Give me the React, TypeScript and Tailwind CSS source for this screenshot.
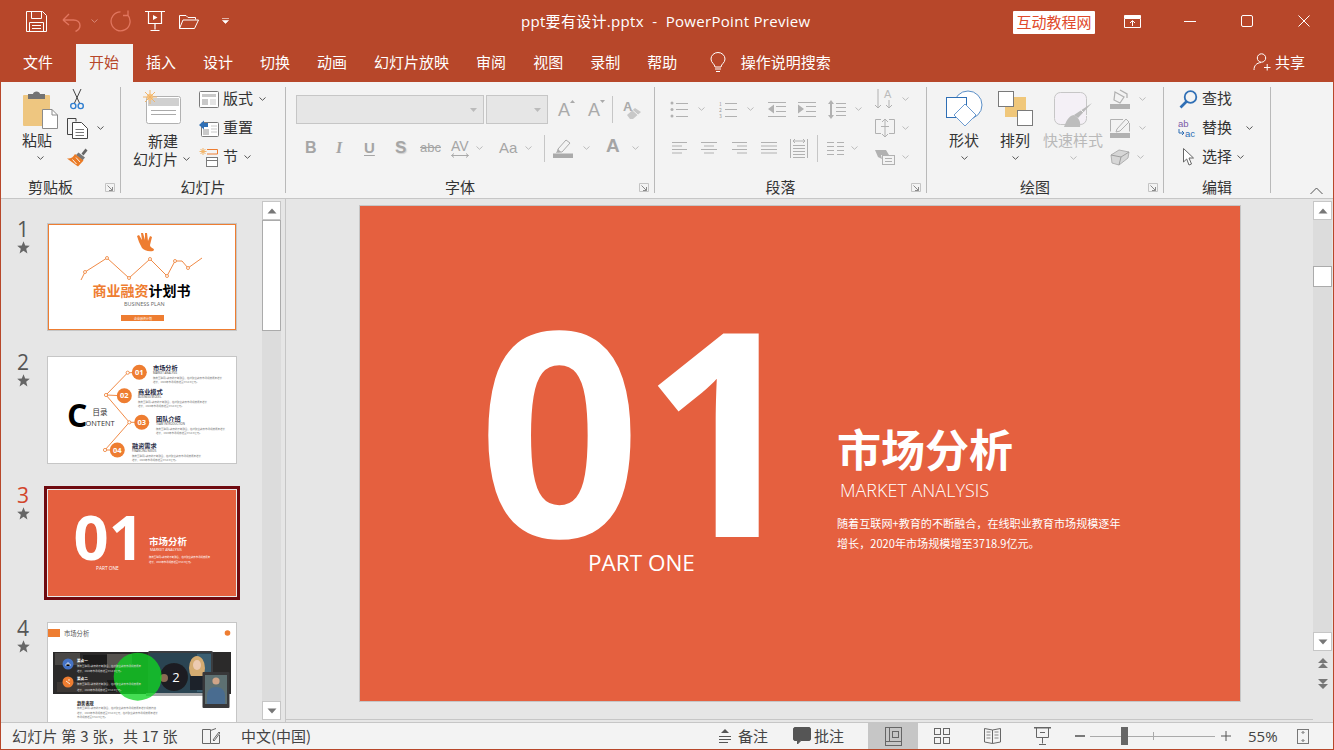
import React from "react";

const G = "#b1b1b1";

function S({ w, h, children, className = "" }: { w: number; h: number; children?: React.ReactNode; className?: string }) {
  return (
    <svg width={w} height={h} viewBox={`0 0 ${w} ${h}`} fill="none" className={"block shrink-0 " + className}>
      {children}
    </svg>
  );
}

function Chev({ c = "#555" }: { c?: string }) {
  return (
    <S w={7} h={4}>
      <path d="M0.5 0.5L3.5 3.3L6.5 0.5" stroke={c} strokeWidth="1" />
    </S>
  );
}

function Launcher() {
  return (
    <div className="absolute right-[5px] bottom-[1px]">
      <S w={10} h={9}>
        <path d="M0.5 8.5V0.5H9.5V8.5Z" stroke="#c4c4c4" />
        <path d="M2.5 2.5L7.5 7.5M7.5 4V7.5H4" stroke="#8a8a8a" />
      </S>
    </div>
  );
}

function Group({ w, label, launcher, children }: { w: string; label: string; launcher?: boolean; children: React.ReactNode }) {
  return (
    <div className={"relative mt-[5px] flex h-[106px] shrink-0 flex-col border-r border-[#b9b9b9] " + w}>
      <div className="h-[91px] shrink-0">{children}</div>
      <div className={"h-[18px] shrink-0 text-center text-[15px] leading-[18px] text-[#333] " + (launcher ? "pr-[20px]" : "")}>{label}</div>
      {launcher && <Launcher />}
    </div>
  );
}

function Tab({ children, active }: { children: React.ReactNode; active?: boolean }) {
  return (
    <div className={"flex h-[38px] items-center px-[13.5px] pb-[2px] text-[15px] whitespace-nowrap " + (active ? "bg-[#f3f3f3] text-[#b7472a]" : "text-white")}>
      {children}
    </div>
  );
}

const Star = () => (
  <S w={13} h={13}>
    <path d="M6.5 0.3L8.2 4.6L12.8 4.8L9.2 7.7L10.4 12.4L6.5 9.8L2.6 12.4L3.8 7.7L0.2 4.8L4.8 4.6Z" fill="#666" />
  </S>
);

function Thumb({ n, active, children }: { n: number; active?: boolean; children: React.ReactNode }) {
  return (
    <div className="flex h-[133px] shrink-0">
      <div className="flex w-[46px] shrink-0 flex-col items-end pr-[18px]">
        <div className={"-mt-[8px] h-[28px] text-[21px] leading-[28px] font-['Open_Sans',sans-serif] " + (active ? "text-[#d2452b]" : "text-[#555]")}>{n}</div>
        <div className="-mt-[2px] -mr-[1px]"><Star /></div>
      </div>
      <div className={"h-[108px] w-[190px] shrink-0 bg-white " + (active ? "ring-[3px] ring-[#6f0a10]" : "")}>{children}</div>
    </div>
  );
}

const F = "'Noto Sans CJK SC', sans-serif";
const OS = "'Open Sans', sans-serif";
const OR = "#ee7d31";

function Tiny({ x, y, t, s = 2.8, c = "#777" }: { x: number; y: number; t: string; s?: number; c?: string }) {
  return <text x={x} y={y} fontSize={s} fill={c} fontFamily={F}>{t}</text>;
}

function Slide1() {
  return (
    <svg width="190" height="108" viewBox="0 0 190 108" className="block">
      <rect x="0.5" y="0.5" width="189" height="107" fill="#fff" stroke="#c6c6c6" />
      <rect x="1.5" y="1.5" width="187" height="105" fill="none" stroke={OR} />
      <path d="M89 16l3 3-2-6 2-1 3 5-1-7 2 0 2 7 0-7 2 0 1 8 2-5 2 1-2 8c0 3 4 3 4 5l-1 1c-5 1-9-1-11-3l-3-6z" fill={OR} />
      <polyline points="34,57 38,49 60,35 82,55 103,36 120,53 128,38 135,38 141,45 155,35" stroke={OR} strokeWidth="0.9" fill="none" />
      {[[38, 49], [60, 35], [82, 55], [103, 36], [120, 53], [128, 38], [141, 45]].map(([x, y], i) => (
        <circle key={i} cx={x} cy={y} r="1.5" fill="#fff" stroke={OR} strokeWidth="0.8" />
      ))}
      <text x="45.5" y="73" fontSize="14" fontWeight="700" fontFamily={F} fill={OR}>商业融资<tspan fill="#000">计划书</tspan></text>
      <text x="77" y="82.5" fontSize="5.5" fontFamily={OS} fill="#666">BUSINESS PLAN</text>
      <rect x="74" y="92" width="43" height="6" fill={OR} />
      <text x="87" y="96.5" fontSize="3" fontFamily={F} fill="#fff">企业融资计划</text>
    </svg>
  );
}

function Slide2() {
  const items = [
    { cx: 92.3, cy: 16.3, n: "01", tx: 106, ty: 13.5, t: "市场分析", s: "MARKET ANALYSIS" },
    { cx: 77.3, cy: 39.7, n: "02", tx: 91, ty: 37.5, t: "商业模式", s: "BUSINESS MODEL" },
    { cx: 94.7, cy: 66.3, n: "03", tx: 109, ty: 64.5, t: "团队介绍", s: "TEAM INTRODUCTION" },
    { cx: 70.3, cy: 94, n: "04", tx: 85, ty: 91.5, t: "融资需求", s: "FINANCING NEEDS" },
  ];
  return (
    <svg width="190" height="108" viewBox="0 0 190 108" className="block">
      <rect x="0.5" y="0.5" width="189" height="107" fill="#fff" stroke="#c6c6c6" />
      <polyline points="80.7,16.7 59,39 82.3,66.3 58,94" stroke={OR} strokeWidth="0.9" fill="none" />
      <line x1="59" y1="39" x2="70" y2="39.5" stroke={OR} strokeWidth="0.9" />
      <line x1="82.3" y1="66.3" x2="87" y2="66.3" stroke={OR} strokeWidth="0.9" />
      <line x1="58" y1="94" x2="63" y2="94" stroke={OR} strokeWidth="0.9" />
      <line x1="80.7" y1="16.7" x2="85" y2="16.7" stroke={OR} strokeWidth="0.9" />
      {[[80.7, 16.7], [59, 39], [82.3, 66.3], [58, 94]].map(([x, y], i) => (
        <circle key={i} cx={x} cy={y} r="1.6" fill="#fff" stroke={OR} strokeWidth="0.8" />
      ))}
      {items.map((i) => (
        <g key={i.n}>
          <circle cx={i.cx} cy={i.cy} r="7.5" fill={OR} />
          <text x={i.cx} y={i.cy + 2.7} fontSize="7.5" fontWeight="700" fill="#fff" textAnchor="middle" fontFamily={OS}>{i.n}</text>
          <text x={i.tx} y={i.ty} fontSize="6.2" fontWeight="700" fill="#1f2a44" fontFamily={F}>{i.t}</text>
          <text x={i.tx} y={i.ty + 4} fontSize="2.8" fill="#444" fontFamily={OS}>{i.s}</text>
          <Tiny x={i.tx} y={i.ty + 9.5} s={2.5} t="随着互联网+教育的不断融合，在线职业教育市场规模逐年增长" />
          <Tiny x={i.tx} y={i.ty + 13} s={2.5} t="增长，2020年市场规模增至3718.9亿元。" />
        </g>
      ))}
      <text x="20" y="70.5" fontSize="32" fontWeight="700" fill="#000" fontFamily={OS}>C</text>
      <text x="45.5" y="58.5" fontSize="7.5" fill="#333" fontFamily={F}>目录</text>
      <text x="38.5" y="69.5" fontSize="7.4" fill="#333" fontFamily={OS}>ONTENT</text>
    </svg>
  );
}

function Slide3() {
  return (
    <svg width="190" height="108" viewBox="0 0 190 108" className="block">
      <rect x="0.5" y="0.5" width="189" height="107" fill="#e5603f" stroke="#e8e8e8" />
      <text x="26.5" y="71" fontSize="61.5" fontWeight="700" fill="#fff" fontFamily={OS}>01</text>
      <text x="49" y="80.5" fontSize="4.8" fill="#fff" fontFamily={OS}>PART ONE</text>
      <text x="102" y="56" fontSize="9.5" fontWeight="700" fill="#fff" fontFamily={F}>市场分析</text>
      <text x="103" y="62" fontSize="3.7" fill="#fff" fontFamily={OS}>MARKET ANALYSIS</text>
      <text x="102" y="69" fontSize="2.4" fill="#fff" fontFamily={F}>随着互联网+教育的不断融合，在线职业教育市场规模逐年</text>
      <text x="102" y="73.5" fontSize="2.4" fill="#fff" fontFamily={F}>增长，2020年市场规模增至3718.9亿元。</text>
    </svg>
  );
}

function Slide4() {
  return (
    <svg width="190" height="108" viewBox="0 0 190 108" className="block">
      <defs>
        <filter id="soft" x="-5%" y="-5%" width="110%" height="110%"><feGaussianBlur stdDeviation="0.5" /></filter>
      </defs>
      <rect x="0.5" y="0.5" width="189" height="107" fill="#fff" stroke="#c6c6c6" />
      <rect x="1" y="7" width="12" height="8" fill={OR} />
      <text x="17" y="14" fontSize="6.3" fill="#555" fontFamily={F}>市场分析</text>
      <circle cx="180.5" cy="11" r="2.8" fill={OR} />
      <rect x="6" y="30" width="178" height="42" fill="#2b2a2a" />
      <g filter="url(#soft)">
        <rect x="8" y="31" width="25" height="12" fill="#4a4745" />
        <rect x="36" y="33" width="28" height="10" fill="#1b1b1b" />
        <rect x="60" y="32" width="25" height="14" fill="#565350" />
        <rect x="10" y="60" width="45" height="10" fill="#3c3836" />
        <rect x="60" y="58" width="30" height="12" fill="#1a1a1a" />
      </g>
      <rect x="101" y="29" width="65" height="44" rx="1.5" fill="#3b3d40" />
      <rect x="103" y="31" width="61" height="40" fill="#2a4452" />
      <g filter="url(#soft)">
        <rect x="150" y="32" width="14" height="38" fill="#3a5f72" />
        <circle cx="127" cy="55" r="14" fill="#1c1f23" />
        <circle cx="117" cy="56" r="4" fill="#8c6a52" />
        <ellipse cx="150" cy="46" rx="8" ry="12" fill="#d4ac71" />
        <ellipse cx="150" cy="43" rx="4" ry="5" fill="#eccab0" />
        <rect x="143" y="54" width="14" height="14" fill="#1b242b" />
      </g>
      <rect x="99" y="71" width="69" height="3" fill="#a5a7aa" />
      <rect x="155.5" y="50" width="27" height="36" rx="1" fill="#38383a" />
      <rect x="158" y="53" width="22" height="29" fill="#5d7072" />
      <g filter="url(#soft)">
        <circle cx="169" cy="59" r="3.6" fill="#cfa488" />
        <path d="M160 82v-8c0-6 4-9 9-9s9 3 9 9v8z" fill="#4a6c90" />
      </g>
      <circle cx="90.7" cy="54.7" r="24" fill="#10d522" fillOpacity="0.78" />
      <text x="129" y="60" fontSize="13" fill="#fff" textAnchor="middle" fontFamily={OS}>2</text>
      <circle cx="21" cy="42" r="5.5" fill="#4472c4" />
      <circle cx="21" cy="60" r="5.5" fill={OR} />
      <path d="M19 44v-2h4v2M21 40v2" stroke="#fff" strokeWidth="0.7" />
      <path d="M19 59l4 3M21 58h2" stroke="#fff" strokeWidth="0.8" />
      <text x="30" y="39.5" fontSize="3.6" fontWeight="700" fill="#fff" fontFamily={F}>要点一</text>
      <Tiny x={30} y={44.5} s={2.5} c="#ddd" t="随着互联网+教育的不断融合，在线职业教育市场规模逐年" />
      <Tiny x={30} y={50} s={2.5} c="#ddd" t="增长，2020年市场规模增至3718.9亿元。" />
      <text x="30" y="58" fontSize="3.6" fontWeight="700" fill="#fff" fontFamily={F}>要点二</text>
      <Tiny x={30} y={63} s={2.5} c="#ddd" t="随着互联网+教育的不断融合，在线职业教育市场规模逐年" />
      <Tiny x={30} y={68.5} s={2.5} c="#ddd" t="增长，2020年市场规模增至3718.9亿元。" />
      <text x="30" y="82.5" fontSize="4.2" fontWeight="700" fill="#222" fontFamily={F}>趋势表现</text>
      <Tiny x={30} y={87} s={2.5} t="随着互联网+教育的不断融合，在线职业教育市场规模逐年增长规模持续" />
      <Tiny x={30} y={91.5} s={2.5} t="增长，2020年市场规模增至3718.9亿元，在线职业教育市场规模逐年增长" />
      <Tiny x={30} y={96} s={2.5} t="市场规模增至3718.9亿元。" />
    </svg>
  );
}

const Up = () => <S w={10} h={6}><path d="M5 0.5L9.5 5.5H0.5Z" fill="#777" /></S>;
const Dn = () => <S w={10} h={6}><path d="M0.5 0.5H9.5L5 5.5Z" fill="#777" /></S>;
const ScrollBtn = ({ children }: { children: React.ReactNode }) => (
  <div className="flex h-[19px] w-[19px] shrink-0 items-center justify-center border border-[#c6c6c6] bg-white">{children}</div>
);

const Lines = ({ d, c = G }: { d: string; c?: string }) => <path d={d} stroke={c} />;

export default function App() {
  return (
    <div className="flex h-[750px] w-[1334px] flex-col overflow-hidden border-x border-b border-[#b7472a] bg-[#e6e6e6] font-['Noto_Sans_CJK_SC',sans-serif]">
      {/* Title bar */}
      <div className="flex h-[44px] shrink-0 items-center bg-[#b7472a] pb-[2px] text-white">
        <div className="flex w-[520px] shrink-0 items-center">
          <S w={21} h={21} className="ml-[25px]">
            <path d="M0.5 0.5H16.5L20.5 4.5V20.5H0.5Z" stroke="#fff" />
            <path d="M5.5 0.5V7.5H15.5V0.5M3.5 20.5V11.5H17.5V20.5" stroke="#fff" />
            <path d="M6 14.5H15M6 17.5H15" stroke="#fff" />
          </S>
          <S w={19} h={21} className="ml-[15px]">
            <path d="M1 9H11.5C15.5 9 18 11.5 18 14.5C18 17 16.5 19 13.5 20.5M1 9L7 3M1 9L7 14" stroke="#e1765f" strokeWidth="1.4" />
          </S>
          <div className="ml-[10px]"><Chev c="#d98a78" /></div>
          <S w={21} h={22} className="ml-[12px]">
            <path d="M10.5 1.8A9.5 9.5 0 1 1 3.5 4.8M3 0.5V5.5H8" stroke="#e1765f" strokeWidth="1.3" transform="matrix(-1 0 0 1 21 0)" />
          </S>
          <S w={20} h={20} className="ml-[14px]">
            <path d="M0 0.5H20M3.5 0.5V12.5H16.5V0.5M10 12.5V18.5M5.5 19.5H14.5" stroke="#fff" strokeWidth="1.2" />
            <path d="M8 4L12.5 6.5L8 9Z" fill="#fff" />
          </S>
          <S w={20} h={15} className="ml-[14px]">
            <path d="M0.5 14.5V1.5H7L9 3.5H16.5V5.5M0.5 14.5H15.5L19.5 6H4L0.5 14.5Z" stroke="#fff" />
          </S>
          <S w={7} h={6} className="ml-[23px]">
            <path d="M0 0.5H7M0.5 2.5H6.5L3.5 5.5Z" fill="#fff" stroke="#fff" strokeWidth="0.6" />
          </S>
        </div>
        <div className="text-[15px] tracking-[0.3px] whitespace-pre font-['Open_Sans','Noto_Sans_CJK_SC',sans-serif]">ppt要有设计.pptx  -  PowerPoint Preview</div>
        <div className="ml-auto flex items-center">
          <div className="mt-[2px] flex h-[23px] w-[82px] items-center justify-center rounded-[1px] bg-white text-[15px] text-[#e04a2b]">互动教程网</div>
          <S w={17} h={13} className="ml-[29px]">
            <path d="M0.5 3.5V12.5H16.5V3.5Z" stroke="#fff" />
            <path d="M0.5 0.5H16.5V3H0.5Z" fill="#fff" stroke="#fff" />
            <path d="M8.5 11V6M6 8L8.5 5.5L11 8" stroke="#fff" />
          </S>
          <S w={12} h={13} className="ml-[43px]"><path d="M0 6.5H12" stroke="#fff" /></S>
          <S w={12} h={12} className="ml-[45px]"><rect x="0.5" y="0.5" width="11" height="11" rx="1.5" stroke="#fff" /></S>
          <S w={12} h={12} className="mr-[23px] ml-[45px]"><path d="M0.5 0.5L11.5 11.5M11.5 0.5L0.5 11.5" stroke="#fff" /></S>
        </div>
      </div>

      {/* Tabs */}
      <div className="flex h-[38px] shrink-0 items-center bg-[#b7472a]">
        <div className="ml-[8.5px]"><Tab>文件</Tab></div>
        <div className="ml-[9px]"><Tab active>开始</Tab></div>
        <Tab>插入</Tab><Tab>设计</Tab><Tab>切换</Tab><Tab>动画</Tab><Tab>幻灯片放映</Tab><Tab>审阅</Tab><Tab>视图</Tab><Tab>录制</Tab><Tab>帮助</Tab>
        <S w={16} h={21} className="ml-[19px] -mt-[2px]">
          <path d="M5 15C5 12 1 11 1 7A7 6.5 0 0 1 15 7C15 11 11 12 11 15Z" stroke="#fff" />
          <path d="M5 17H11M6 19.5H10" stroke="#fff" />
        </S>
        <div className="ml-[15px] pb-[2px] text-[15px] text-white">操作说明搜索</div>
        <div className="ml-auto flex items-center pb-[2px] text-[15px] text-white">
          <S w={18} h={18}>
            <circle cx="8.5" cy="5" r="4.2" stroke="#fff" />
            <path d="M1 17C1 12.5 3.5 10 8 9.5M11 14.5H17.5M14.2 11V17.5" stroke="#fff" />
          </S>
          <span className="mr-[28px] ml-[4px]">共享</span>
        </div>
      </div>

      {/* Ribbon */}
      <div className="flex h-[117px] shrink-0 border-b border-[#c6c6c6] bg-[#f3f3f3]">
        <Group w="w-[120px]" label="剪贴板" launcher>
          <div className="flex">
            <div className="ml-[21px] flex w-[36px] flex-col items-center pt-[3px]">
              <S w={36} h={39} className="ml-[2px]">
                <rect x="0" y="5" width="27" height="31" rx="1" fill="#eec680" />
                <path d="M5 9V4H10C10 0.5 17 0.5 17 4H22V9Z" fill="#737373" />
                <path d="M19.5 19.5H29L34.5 25V38.5H19.5Z" fill="#fff" stroke="#8b8b8b" />
                <path d="M29 19.5V25H34.5" stroke="#8b8b8b" />
              </S>
              <div className="mt-[2px] -ml-[6px] text-[15px] leading-[18px] text-[#333]">粘贴</div>
              <div className="mt-[7px]"><Chev /></div>
            </div>
            <div className="ml-[9px] flex flex-col gap-[5px]">
              <div className="flex h-6 items-center pl-[3px]">
                <S w={14} h={21}>
                  <path d="M3 0L9.5 14M11 0L4.5 14" stroke="#444" />
                  <circle cx="3.3" cy="17" r="2.6" stroke="#2f7ed0" strokeWidth="1.4" />
                  <circle cx="10.7" cy="17" r="2.6" stroke="#2f7ed0" strokeWidth="1.4" />
                </S>
              </div>
              <div className="flex h-6 items-center">
                <S w={21} h={21}>
                  <path d="M0.5 0.5H9V3.5M5.5 16.5H0.5V0.5" stroke="#444" />
                  <path d="M5.5 4.5H14.5L20.5 10.5V20.5H5.5Z" fill="#fff" stroke="#444" />
                  <path d="M8.5 11.5H17M8.5 14.5H17M8.5 17.5H17" stroke="#777" />
                </S>
                <div className="ml-[9px]"><Chev /></div>
              </div>
              <div className="flex h-6 items-center">
                <S w={21} h={19}>
                  <path d="M14.5 5.5L18.5 0.5L20.5 2.5L16.5 7.5Z" fill="#666" />
                  <path d="M11.5 4.5L18 9.5L15.5 12.5L9 7Z" fill="#777" />
                  <path d="M8 6L16.5 12.5L11 18.5L0 10.5C3.5 11 6 9.5 8 6Z" fill="#ea7b26" />
                  <path d="M5.5 11.5L9.5 16M9 9.5L13 14" stroke="#fff" strokeWidth="0.9" />
                </S>
              </div>
            </div>
          </div>
        </Group>

        <Group w="w-[165px]" label="幻灯片">
          <div className="flex">
            <div className="ml-[12px] w-[60px] shrink-0 pt-[3px]">
              <S w={38} h={34} className="ml-[10px]">
                <rect x="3.5" y="6.5" width="34" height="27" rx="2" fill="#fff" stroke="#b1b1b1" />
                <rect x="5" y="8" width="31" height="8" fill="#d0d0d0" />
                <path d="M8 20.5H33M8 24.5H33" stroke="#aaa" />
                <circle cx="7" cy="7" r="3.2" fill="#f7cb8c" />
                <path d="M7 0V14M0 7H14M2 2L12 12M12 2L2 12" stroke="#f2b56b" />
              </S>
              <div className="mt-[8px] ml-[15px] text-[15px] leading-[18px] text-[#333]">新建</div>
              <div className="flex items-center text-[15px] leading-[18px] text-[#333]">幻灯片<span className="ml-[5px]"><Chev /></span></div>
            </div>
            <div className="ml-[6px] flex flex-col gap-[5px] text-[15px] text-[#333]">
              <div className="flex h-6 items-center">
                <S w={20} h={17}>
                  <rect x="0.5" y="0.5" width="19" height="16" rx="1" stroke="#7a7a7a" fill="#fff" />
                  <rect x="3" y="3" width="14" height="3" fill="#c9c9c9" />
                  <rect x="3" y="8" width="6" height="6" fill="#c9c9c9" />
                  <path d="M11 9H17M11 11H17M11 13H17" stroke="#c9c9c9" />
                </S>
                <span className="ml-[4px] -mt-[1px]">版式</span>
                <span className="ml-[6px]"><Chev /></span>
              </div>
              <div className="flex h-6 items-center">
                <S w={20} h={17}>
                  <rect x="2.5" y="2.5" width="17" height="14" rx="1" stroke="#7a7a7a" fill="#fff" />
                  <rect x="4" y="9" width="6" height="6" fill="#c9c9c9" />
                  <path d="M12 6H18M12 9H18M12 12H18" stroke="#c9c9c9" />
                  <path d="M0 5L5 0.5V3H9V7H5V9.5Z" fill="#2f6fb5" />
                </S>
                <span className="ml-[4px] -mt-[1px]">重置</span>
              </div>
              <div className="flex h-6 items-center">
                <S w={20} h={19}>
                  <circle cx="4" cy="3.5" r="1.5" fill="#f7cb8c" />
                  <path d="M4 0V7M0.5 3.5H7.5M1.5 1L6.5 6M6.5 1L1.5 6" stroke="#f2b56b" />
                  <path d="M8 1.5H18.5V6H8" stroke="#ed7d31" />
                  <rect x="7.5" y="9.5" width="11" height="9" fill="#fff" stroke="#7a7a7a" />
                  <path d="M7.5 12.5H18.5" stroke="#7a7a7a" />
                </S>
                <span className="ml-[4px] -mt-[1px]">节</span>
                <span className="ml-[6px]"><Chev /></span>
              </div>
            </div>
          </div>
        </Group>

        <Group w="w-[369px]" label="字体" launcher>
          <div className="ml-[10px] mt-[8px] flex h-[29px] items-center">
            <div className="flex h-[29px] w-[188px] items-center justify-end border border-[#c6c6c6] bg-[#e6e6e6] pr-[6px]"><S w={7} h={4}><path d="M0 0H7L3.5 4Z" fill="#bbb" /></S></div>
            <div className="ml-[2px] flex h-[29px] w-[62px] items-center justify-end border border-[#c6c6c6] bg-[#e6e6e6] pr-[6px]"><S w={7} h={4}><path d="M0 0H7L3.5 4Z" fill="#bbb" /></S></div>
            <div className="relative ml-[10px] w-[16px] text-[18px] leading-none text-[#aaa] font-['Liberation_Sans',sans-serif]">A<div className="absolute top-[-1px] right-[-1px]"><S w={5} h={3}><path d="M2.5 0L5 3H0Z" fill="#aaa" /></S></div></div>
            <div className="relative ml-[14px] w-[16px] text-[18px] leading-none text-[#aaa] font-['Liberation_Sans',sans-serif]">A<div className="absolute top-[-1px] right-[-1px]"><S w={5} h={3}><path d="M0 0H5L2.5 3Z" fill="#aaa" /></S></div></div>
            <div className="ml-[8px] h-[27px] w-px bg-[#c6c6c6]" />
            <div className="relative ml-[10px] h-[20px] w-[19px]">
              <span className="absolute top-0 left-0 text-[13px] leading-[13px] font-semibold text-[#aaa] font-['Liberation_Sans',sans-serif]">A</span>
              <S w={19} h={20}><path d="M4 15L12 8L18 12L10 19H7Z" fill="#c8c8c8" /><path d="M10 10.5L15 15" stroke="#f3f3f3" /></S>
            </div>
          </div>
          <div className="mt-[12px] flex h-[24px] items-center font-['Liberation_Sans',sans-serif] text-[#a5a5a5]">
            <div className="ml-[19px] w-[10px] text-[16px] font-bold">B</div>
            <div className="ml-[21px] w-[9px] text-[16px] font-bold italic font-['Liberation_Serif',serif]">I</div>
            <div className="ml-[19px] w-[11px] text-[15px] font-bold underline underline-offset-2">U</div>
            <div className="ml-[20px] w-[11px] text-[17px] font-bold [text-shadow:1px_1px_1px_#cfcfcf]">S</div>
            <div className="ml-[14px] w-[20px] text-[13px] line-through">abc</div>
            <div className="relative ml-[11px] -mt-[4px] w-[18px] text-[14px] leading-[16px]">AV
              <div className="absolute top-[15px] left-0"><S w={18} h={5}><path d="M0.5 2.5H17.5M0.5 2.5L3 0.5M0.5 2.5L3 4.5M17.5 2.5L15 0.5M17.5 2.5L15 4.5" stroke="#aaa" /></S></div>
            </div>
            <div className="ml-[7px]"><Chev c="#bbb" /></div>
            <div className="ml-[16px] w-[19px] text-[15px]">Aa</div>
            <div className="ml-[7px]"><Chev c="#bbb" /></div>
            <div className="ml-[12px] h-[27px] w-px bg-[#c6c6c6]" />
            <S w={20} h={20} className="ml-[8px]">
              <path d="M5 11L13 2L17 5L9 14L5 14Z" stroke="#aaa" />
              <path d="M3 15L5 11L8 14Z" fill="#aaa" />
              <rect x="0" y="15.5" width="20" height="4.5" fill="#aaa" />
            </S>
            <div className="ml-[10px]"><Chev c="#bbb" /></div>
            <div className="ml-[16px] -mt-[4px] w-[14px] text-[19px] font-bold">A</div>
            <div className="ml-[12px]"><Chev c="#bbb" /></div>
          </div>
        </Group>

        <Group w="w-[272px]" label="段落" launcher>
          <div className="flex">
            <div className="w-[220px] shrink-0">
              <div className="mt-[10px] flex h-[24px] items-center">
                <S w={18} h={17} className="ml-[15px]">
                  <circle cx="2" cy="2" r="1.5" fill={G} /><circle cx="2" cy="8.5" r="1.5" fill={G} /><circle cx="2" cy="15" r="1.5" fill={G} />
                  <Lines d="M6 2.5H18M6 8.5H18M6 15.5H18" />
                </S>
                <div className="ml-[10px]"><Chev c="#bbb" /></div>
                <S w={18} h={17} className="ml-[14px]">
                  <text x="0" y="4.5" fontSize="5" fill="#999">1</text><text x="0" y="10.5" fontSize="5" fill="#999">2</text><text x="0" y="16.5" fontSize="5" fill="#999">3</text>
                  <Lines d="M6 2.5H18M6 8.5H18M6 15.5H18" />
                </S>
                <div className="ml-[10px]"><Chev c="#bbb" /></div>
                <S w={18} h={17} className="ml-[14px]">
                  <Lines d="M0 1.5H18M8 5.5H18M8 10.5H18M0 15.5H18" />
                  <path d="M0 8L6 3.5V12.5Z" fill={G} />
                </S>
                <S w={18} h={17} className="ml-[12px]">
                  <Lines d="M0 1.5H18M8 5.5H18M8 10.5H18M0 15.5H18" />
                  <path d="M6 8L0 3.5V12.5Z" fill={G} />
                </S>
                <S w={18} h={19} className="ml-[12px]">
                  <Lines d="M8 3.5H18M8 7.5H18M8 11.5H18M8 15.5H18" />
                  <path d="M3 0L6 4H0ZM3 19L0 15H6Z" fill={G} />
                  <path d="M3 3V16" stroke={G} strokeWidth="2" />
                </S>
                <div className="ml-[9px]"><Chev c="#bbb" /></div>
              </div>
              <div className="mt-[15px] flex h-[24px] items-center">
                <S w={15} h={12} className="ml-[17px]"><Lines d="M0 0.5H15M0 4H10M0 7.5H15M0 11H10" /></S>
                <S w={16} h={12} className="ml-[14px]"><Lines d="M0 0.5H16M3 4H13M0 7.5H16M3 11H13" /></S>
                <S w={15} h={12} className="ml-[15px]"><Lines d="M0 0.5H15M5 4H15M0 7.5H15M5 11H15" /></S>
                <S w={16} h={12} className="ml-[14px]"><Lines d="M0 0.5H16M0 4H16M0 7.5H16M0 11H16" /></S>
                <S w={18} h={20} className="ml-[13px]">
                  <Lines d="M0.5 1V20M17.5 1V20M3 7.5H15M3 10.5H15M3 13.5H15M3 16.5H15M3 19.5H15" />
                  <path d="M3 3H15M3 3L5 1M3 3L5 5M15 3L13 1M15 3L13 5" stroke={G} />
                </S>
                <div className="ml-[9px] h-[27px] w-px bg-[#c6c6c6]" />
                <S w={17} h={13} className="ml-[9px]"><Lines d="M0 0.5H7M10 0.5H17M0 4.5H7M10 4.5H17M0 8.5H7M10 8.5H17M0 12.5H7M10 12.5H17" /></S>
                <div className="ml-[7px]"><Chev c="#bbb" /></div>
              </div>
            </div>
            <div className="flex flex-col gap-[5px]">
              {[
                <S w={20} h={20} key="a"><path d="M3 0V19M0 16L3 19L6 16" stroke={G} /><text x="9" y="9" fontSize="11" fill="#bbb" fontFamily="Liberation Sans">A</text><path d="M14 11V19M11 16L14 19L17 16" stroke={G} /></S>,
                <S w={20} h={18} key="b"><path d="M6 0.5H0.5V14.5H6M14 0.5H19.5V14.5H14" stroke={G} /><path d="M10 0V18M7 3L10 0L13 3M7 15L10 18L13 15M6 7.5H14" stroke={G} /></S>,
                <S w={20} h={16} key="c"><path d="M0 1H11L14 6H6L7 10L3 8Z" fill={G} /><rect x="7.5" y="6.5" width="12" height="9" stroke={G} fill="#f3f3f3" /><path d="M10 9.5H17M10 12.5H17" stroke={G} /></S>,
              ].map((ic, i) => (
                <div key={i} className="flex h-6 items-center">{ic}<div className="ml-[7px]"><Chev c="#bbb" /></div></div>
              ))}
            </div>
          </div>
        </Group>

        <Group w="w-[237px]" label="绘图" launcher>
          <div className="flex">
            <div className="ml-[7px] flex w-[60px] shrink-0 flex-col items-center pt-[3px]">
              <S w={37} h={37}>
                <circle cx="22" cy="15" r="14" fill="#fff" stroke="#5b8fc7" />
                <rect x="0.5" y="7.5" width="20" height="20" fill="#fff" stroke="#2f6fb5" />
                <path d="M19 14L30 25L19 36L8 25Z" fill="#fff" stroke="#6d9bd0" />
              </S>
              <div className="mt-[4px] text-[15px] leading-[18px] text-[#333]">形状</div>
              <div className="mt-[7px]"><Chev /></div>
            </div>
            <div className="ml-[1px] flex w-[40px] shrink-0 flex-col items-center pt-[3px]">
              <S w={35} h={37}>
                <rect x="7" y="7" width="21" height="20" fill="#f0c77a" />
                <rect x="0.5" y="1.5" width="15" height="15" fill="#fff" stroke="#7a7a7a" />
                <rect x="19.5" y="20.5" width="15" height="15" fill="#fff" stroke="#7a7a7a" />
              </S>
              <div className="mt-[4px] text-[15px] leading-[18px] text-[#333]">排列</div>
              <div className="mt-[7px]"><Chev /></div>
            </div>
            <div className="ml-[8px] flex w-[60px] shrink-0 flex-col items-center pt-[3px]">
              <S w={38} h={37}>
                <rect x="0.5" y="2.5" width="32" height="32" rx="6" fill="#f4f0f6" stroke="#c6c6c6" />
                <path d="M38 13L24 28L20 25Z" fill="#b9b9b9" />
                <path d="M20 25C14 26 12 32 10 37H26C27 32 25 28 20 25Z" fill="#bdbdbd" />
                <path d="M26 19L33 26" stroke="#f3f3f3" />
              </S>
              <div className="mt-[4px] text-[15px] leading-[18px] text-[#b9b9b9]">快速样式</div>
              <div className="mt-[7px]"><Chev c="#bbb" /></div>
            </div>
            <div className="ml-[7px] flex flex-col gap-[5px]">
              <div className="flex h-6 items-center">
                <S w={20} h={20}><path d="M5 3L14 8L10 14L4 11Z" fill="none" stroke={G} strokeWidth="1.2" /><path d="M10 1L17 5V9" stroke={G} strokeWidth="1.3" /><rect x="0" y="15" width="20" height="5" fill={G} /></S>
                <div className="ml-[9px]"><Chev c="#bbb" /></div>
              </div>
              <div className="flex h-6 items-center">
                <S w={20} h={20}><path d="M0.5 13.5V1.5H13M19.5 5V13.5" stroke={G} /><path d="M7 11L16 1L19 4L10 13L6 14Z" stroke={G} fill="#f3f3f3" /><rect x="0" y="15" width="20" height="5" fill={G} /></S>
                <div className="ml-[9px]"><Chev c="#bbb" /></div>
              </div>
              <div className="flex h-6 items-center">
                <S w={20} h={17}><path d="M1 6L9 1L19 3L18 9L9 16L2 14Z" fill="#d6d6d6" stroke={G} /><path d="M1 6L11 8L19 3M11 8L9 16" stroke="#9f9f9f" /></S>
                <div className="ml-[7px]"><Chev c="#bbb" /></div>
              </div>
            </div>
          </div>
        </Group>

        <Group w="w-[107px]" label="编辑">
          <div className="flex flex-col gap-[5px] text-[15px] text-[#333]">
            <div className="flex h-6 items-center pl-[15px]">
              <S w={19} h={19}><circle cx="11.5" cy="7" r="5.8" stroke="#2f6fb5" strokeWidth="1.8" /><path d="M7.5 11.5L1.5 17.5" stroke="#2f6fb5" strokeWidth="2.6" /></S>
              <span className="ml-[4px] -mt-[1px]">查找</span>
            </div>
            <div className="flex h-6 items-center pl-[14px]">
              <S w={20} h={19}>
                <text x="0" y="8" fontSize="9.5" fill="#7b5aa6" fontFamily="Liberation Sans">ab</text>
                <text x="7" y="18" fontSize="9.5" fill="#2f6fb5" fontFamily="Liberation Sans">ac</text>
                <path d="M1 10V14H6M4 12L6 14L4 16" stroke="#2f6fb5" />
              </S>
              <span className="ml-[4px] -mt-[1px]">替换</span>
              <span className="ml-[14px]"><Chev /></span>
            </div>
            <div className="flex h-6 items-center pl-[19px]">
              <S w={11} h={18}><path d="M0.5 0.5V14L3.7 11L6 17L8.5 16L6 10H10.5Z" fill="#fff" stroke="#666" /></S>
              <span className="ml-[8px] -mt-[1px]">选择</span>
              <span className="ml-[5px]"><Chev /></span>
            </div>
          </div>
        </Group>

        <S w={13} h={8} className="mt-[105px] ml-[39px]"><path d="M0.5 7L6.5 1L12.5 7" stroke="#555" /></S>
      </div>

      {/* Body */}
      <div className="flex min-h-0 flex-1">
        <div className="flex h-full w-[285px] shrink-0 border-r border-[#c6c6c6]">
          <div className="flex w-[261px] shrink-0 flex-col overflow-hidden pt-[24px]">
            <Thumb n={1}><Slide1 /></Thumb>
            <Thumb n={2}><Slide2 /></Thumb>
            <Thumb n={3} active><Slide3 /></Thumb>
            <Thumb n={4}><Slide4 /></Thumb>
          </div>
          <div className="mt-[2px] mb-[2px] flex h-[519px] w-[19px] shrink-0 flex-col justify-between bg-[#dcdcdc]">
            <div>
              <ScrollBtn><Up /></ScrollBtn>
              <div className="h-[111px] w-[19px] border border-[#ababab] bg-white" />
            </div>
            <ScrollBtn><Dn /></ScrollBtn>
          </div>
        </div>

        <div className="h-[521px] min-w-0 flex-1 border-b border-[#c6c6c6] pt-[6px] pl-[73px]">
          <div className="relative h-[497px] w-[882px] overflow-hidden border border-[#c6c6c6] bg-[#e5603f] text-white">
            <div className="absolute top-[113px] left-[118px] text-[285px] leading-[214px] font-bold font-['Open_Sans',sans-serif]">01</div>
            <div className="absolute top-[342px] left-[228px] text-[22.5px] leading-[30px] font-['Open_Sans',sans-serif]">PART ONE</div>
            <div className="absolute top-[212px] left-[477px] text-[44px] leading-[60px] font-bold">市场分析</div>
            <div className="absolute top-[272px] left-[480px] text-[18px] leading-[24px] font-['Open_Sans',sans-serif] font-light">MARKET ANALYSIS</div>
            <div className="absolute top-[307px] left-[477px] text-[11.1px] leading-[20px] whitespace-nowrap">随着互联网+教育的不断融合，在线职业教育市场规模逐年<br />增长，2020年市场规模增至3718.9亿元。</div>
          </div>
        </div>

        <div className="w-[20px] shrink-0 pt-[2px]">
          <div className="flex h-[450px] w-[19px] flex-col justify-between bg-[#dcdcdc]">
            <div>
              <ScrollBtn><Up /></ScrollBtn>
              <div className="mt-[46px] h-[21px] w-[19px] border border-[#ababab] bg-white" />
            </div>
            <ScrollBtn><Dn /></ScrollBtn>
          </div>
          <div className="mt-[7px] flex w-[19px] flex-col items-center">
            <S w={14} h={11}><path d="M7 0L12 5H2ZM7 5L12 10H2Z" fill="#777" /></S>
            <S w={14} h={11} className="mt-[10px]"><path d="M2 0H12L7 5ZM2 5H12L7 10Z" fill="#777" /></S>
          </div>
        </div>
      </div>

      {/* Status bar */}
      <div className="flex h-[27px] shrink-0 items-center border-t border-[#c6c6c6] bg-[#f3f3f3] text-[15px] text-[#444]">
        <div className="ml-[11px] w-[190px] shrink-0 tracking-[0.25px] whitespace-pre">幻灯片 第 3 张，共 17 张</div>
        <S w={18} h={16}>
          <path d="M0.5 1.5H8.5V15.5H0.5ZM8.5 2.5L14 0.5M8.5 15.5H17.5V7" stroke="#666" />
          <path d="M11 12L17 4L18 5L12 13Z" stroke="#666" />
        </S>
        <div className="ml-[21px] w-[70px] shrink-0 whitespace-nowrap">中文(中国)</div>
        <S w={14} h={15} className="ml-[407px]">
          <path d="M7 0L11 4H3Z" fill="#555" />
          <path d="M1 7.5H13M1 10.5H13M1 13.5H10" stroke="#555" />
        </S>
        <div className="ml-[6px] w-[30px] shrink-0">备注</div>
        <S w={18} h={18} className="ml-[25px]">
          <path d="M2 0.5H16C17 0.5 17.5 1 17.5 2V12C17.5 13 17 13.5 16 13.5H8L4.5 17V13.5H2C1 13.5 0.5 13 0.5 12V2C0.5 1 1 0.5 2 0.5Z" fill="#555" stroke="#555" />
        </S>
        <div className="ml-[3px] w-[30px] shrink-0">批注</div>
        <div className="ml-[24px] flex h-[26px] w-[50px] shrink-0 items-center justify-center bg-[#c6c6c6]">
          <S w={17} h={19}>
            <rect x="0.5" y="0.5" width="16" height="18" stroke="#666" />
            <path d="M4.5 0.5V14.5M0.5 14.5H16.5" stroke="#666" />
            <rect x="7.5" y="4.5" width="6" height="6" stroke="#666" />
          </S>
        </div>
        <S w={16} h={16} className="ml-[16px]">
          <rect x="0.5" y="0.5" width="6" height="6" stroke="#666" /><rect x="9.5" y="0.5" width="6" height="6" stroke="#666" />
          <rect x="0.5" y="9.5" width="6" height="6" stroke="#666" /><rect x="9.5" y="9.5" width="6" height="6" stroke="#666" />
        </S>
        <S w={17} h={16} className="ml-[34px]">
          <path d="M8.5 2L0.5 0.5V14L8.5 15.5L16.5 14V0.5ZM8.5 2V15.5" stroke="#666" />
          <path d="M2.5 4H6.5M2.5 7H6.5M2.5 10H6.5M10.5 4H14.5M10.5 7H14.5M10.5 10H14.5" stroke="#888" />
        </S>
        <S w={17} h={18} className="ml-[33px]">
          <path d="M0 0.5H17" stroke="#666" strokeWidth="2" />
          <path d="M2.5 1V10.5H14.5V1M8.5 10.5V16.5M5 17.5H12M6 5.5H11" stroke="#666" />
        </S>
        <S w={10} h={10} className="ml-[24px]"><path d="M0 5H10" stroke="#444" strokeWidth="1.4" /></S>
        <div className="relative ml-[5px] flex h-[18px] w-[125px] shrink-0 items-center">
          <div className="h-px w-full bg-[#aaa]" />
          <div className="absolute top-[5px] left-[62.5px] h-[8px] w-px bg-[#aaa]" />
          <div className="absolute top-0 left-[31px] h-[18px] w-[7px] bg-[#666]" />
        </div>
        <S w={10} h={10} className="ml-[6px]"><path d="M0 5H10M5 0V10" stroke="#555" /></S>
        <div className="ml-[17px] w-[31px] shrink-0 font-['Open_Sans',sans-serif]">55%</div>
        <S w={12} h={15} className="ml-[18px]">
          <rect x="0.5" y="0.5" width="11" height="14" stroke="#777" />
          <path d="M6 2.5V5M4.5 4L6 2.5L7.5 4M6 12.5V10M4.5 11L6 12.5L7.5 11" stroke="#777" />
        </S>
      </div>
    </div>
  );
}
